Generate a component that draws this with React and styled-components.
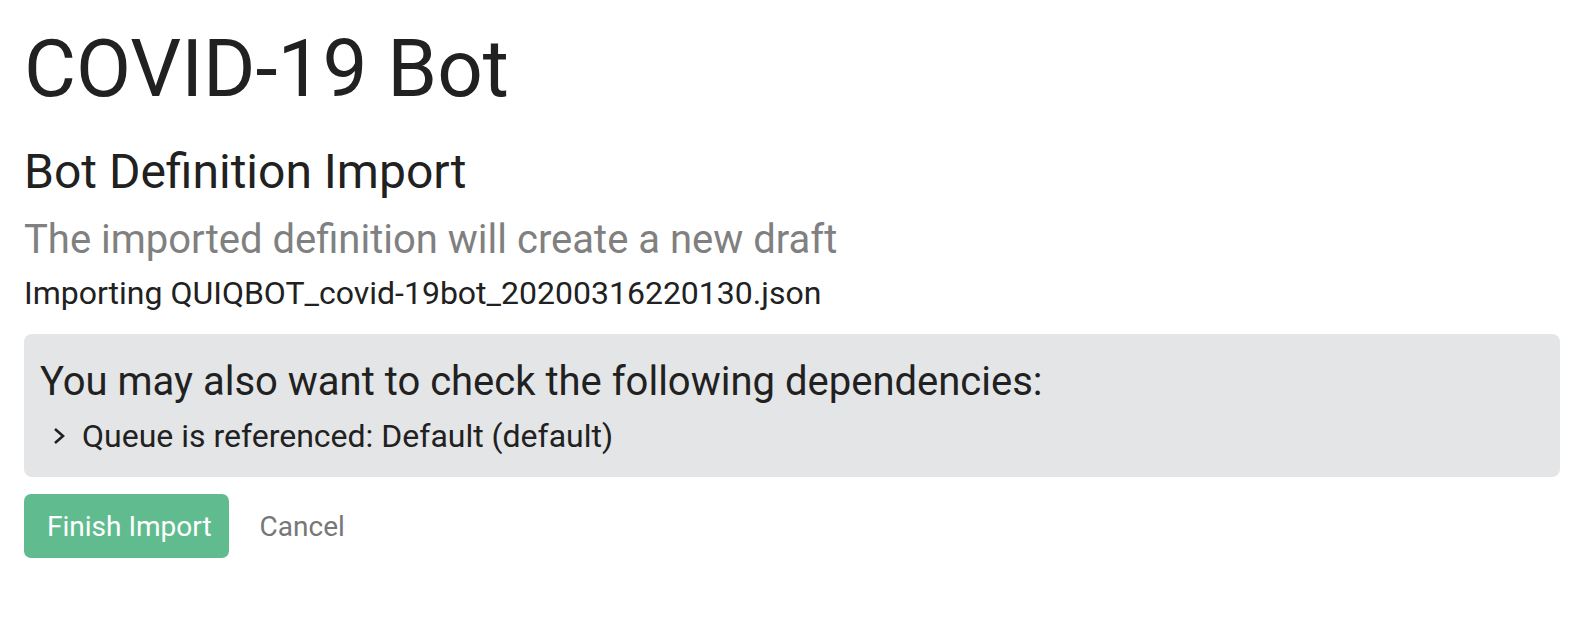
import React from 'react';
import styled, { createGlobalStyle } from 'styled-components';

const GlobalStyle = createGlobalStyle`
 html, body {
    margin: 0;
    padding: 0;
    background: #ffffff;
 }
 body {
    font-family: Roboto, "Noto Sans", "Liberation Sans", sans-serif;
    color: #212121;
 }
`;

const Page = styled.div`
 display: flex;
 flex-direction: column;
 padding: 21px 24px 0 24px;
`;

const Title = styled.h1`
 margin: 0;
 font-size: 80px;
 line-height: 96px;
 font-weight: 400;
`;

const SectionTitle = styled.h2`
 margin: 26px 0 0 0;
 font-size: 48px;
 line-height: 58px;
 font-weight: 400;
`;

const Subtitle = styled.p`
 margin: 15px 0 0 0;
 font-size: 40px;
 line-height: 48px;
 color: #808080;
`;

const FileLine = styled.p`
 margin: 10px 0 0 0;
 font-size: 32px;
 line-height: 38px;
`;

const DependencyPanel = styled.div`
 display: flex;
 flex-direction: column;
 margin-top: 22px;
 padding: 24px 16px 22px 16px;
 background: #e4e5e7;
 border-radius: 8px;
`;

const PanelHeading = styled.div`
 font-size: 40px;
 line-height: 48px;
`;

const DependencyList = styled.ul`
 list-style: none;
 margin: 11px 0 0 0;
 padding: 0 0 0 13px;
`;

const DependencyItem = styled.li`
 display: flex;
 align-items: center;
 gap: 17px;
 font-size: 32px;
 line-height: 38px;
`;

const Chevron = styled.svg`
 width: 12px;
 height: 18px;
 flex-shrink: 0;
`;

const Actions = styled.div`
 display: flex;
 align-items: center;
 gap: 31px;
 margin-top: 17px;
`;

const PrimaryButton = styled.button`
 height: 64px;
 padding: 0 17px 0 23px;
 border: none;
 border-radius: 7px;
 background: #60bc8f;
 color: #ffffff;
 font-family: inherit;
 font-size: 28px;
 cursor: pointer;
`;

const LinkButton = styled.button`
 padding: 0;
 border: none;
 background: transparent;
 color: #777777;
 font-family: inherit;
 font-size: 28px;
 cursor: pointer;
`;

const App = () => {
 const dependencies = ['Queue is referenced: Default (default)'];

 return (
    <>
      <GlobalStyle />
      <Page>
        <Title>COVID-19 Bot</Title>
        <SectionTitle>Bot Definition Import</SectionTitle>
        <Subtitle>The imported definition will create a new draft</Subtitle>
        <FileLine>Importing QUIQBOT_covid-19bot_20200316220130.json</FileLine>
        <DependencyPanel>
          <PanelHeading>You may also want to check the following dependencies:</PanelHeading>
          <DependencyList>
            {dependencies.map((dep) => (
              <DependencyItem key={dep}>
                <Chevron viewBox="0 0 12 18">
                  <polyline points="2,2 10,9 2,16" fill="none" stroke="#212121" strokeWidth="2.6" />
                </Chevron>
                {dep}
              </DependencyItem>
            ))}
          </DependencyList>
        </DependencyPanel>
        <Actions>
          <PrimaryButton>Finish Import</PrimaryButton>
          <LinkButton>Cancel</LinkButton>
        </Actions>
      </Page>
    </>
 );
};

export default App;
